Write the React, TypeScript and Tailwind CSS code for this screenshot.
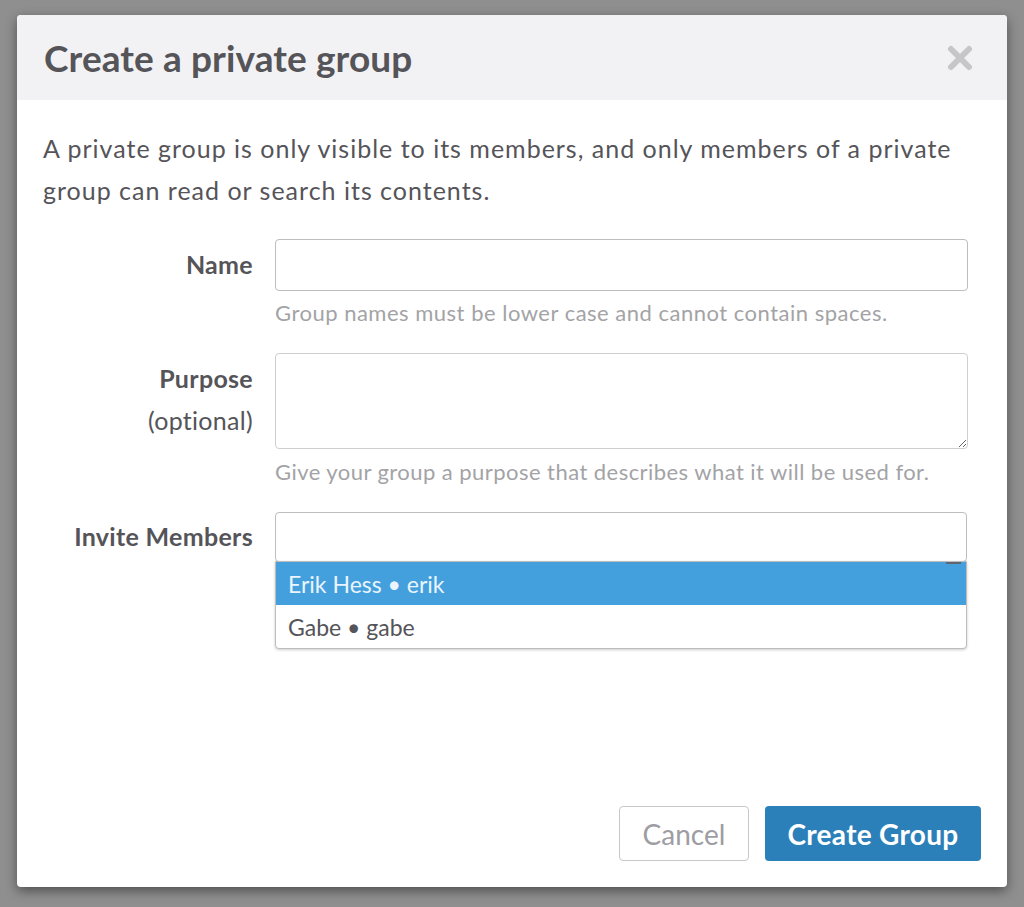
import React from "react";

export default function App() {
  return (
    <div
      className="w-[1024px] h-[907px] bg-[#8f8f8f] pt-[15px] pl-[17px]"
      style={{ fontFamily: "Lato, 'Open Sans', sans-serif" }}
    >
      <div className="w-[990px] h-[872px] bg-white rounded-[4px] shadow-[0_4px_12px_rgba(0,0,0,0.45)] flex flex-col overflow-hidden">
        <div className="h-[85px] bg-[#f2f2f4] flex items-center justify-between pl-[27px] pr-[33px]">
          <h1 className="text-[37px] font-bold text-[#555459] leading-none tracking-[0.1px]">
            Create a private group
          </h1>
          <svg width="28" height="28" viewBox="0 0 28 28">
            <path
              d="M5 5 L23 23 M23 5 L5 23"
              stroke="#c6c6c8"
              strokeWidth="6"
              strokeLinecap="round"
            />
          </svg>
        </div>
        <div className="flex-1 flex flex-col px-[26px] pt-[27px] pb-[26px]">
          <p className="text-[25px] leading-[42px] tracking-[1px] text-[#555459]">
            A private group is only visible to its members, and only members of a private group can read or search its contents.
          </p>
          <div className="mt-[28px] flex flex-col gap-[28px]">
            <div className="flex">
              <div className="w-[211px] text-right pt-[4px] pr-[1px] text-[25px] leading-[42px] tracking-[0.3px] font-bold text-[#555459]">
                Name
              </div>
              <div className="ml-[21px] w-[693px]">
                <div className="h-[52px] border border-[#bdbdbd] rounded-[4px]"></div>
                <div className="mt-[10px] text-[22px] leading-[24px] tracking-[0.5px] text-[#a3a3a6]">
                  Group names must be lower case and cannot contain spaces.
                </div>
              </div>
            </div>
            <div className="flex">
              <div className="w-[211px] text-right pt-[4px] pr-[1px] text-[25px] leading-[42px] tracking-[0.3px] text-[#555459]">
                <div className="font-bold">Purpose</div>
                <div>(optional)</div>
              </div>
              <div className="ml-[21px] w-[693px]">
                <textarea className="block w-full h-[96px] border border-[#cfcfcf] rounded-[4px] outline-none"></textarea>
                <div className="mt-[11px] text-[22px] leading-[24px] tracking-[0.45px] text-[#a3a3a6]">
                  Give your group a purpose that describes what it will be used for.
                </div>
              </div>
            </div>
            <div className="flex">
              <div className="w-[211px] text-right pt-[3px] pr-[1px] text-[25px] leading-[42px] tracking-[0.3px] font-bold text-[#555459]">
                Invite Members
              </div>
              <div className="ml-[21px] w-[692px] relative">
                <div className="h-[50px] border border-[#bdbdbd] rounded-[4px]"></div>
                <div className="absolute left-0 right-0 top-[49px] bg-white border border-[#bdbdbd] rounded-b-[4px] shadow-[0_1px_3px_rgba(0,0,0,0.2)]">
                  <div className="h-[43px] bg-[#449fdd] text-[#eaf5fd] text-[23px] leading-[45px] pl-[12px]">
                    Erik Hess • erik
                  </div>
                  <div className="h-[43px] text-[#555459] text-[23px] leading-[45px] pl-[12px]">
                    Gabe • gabe
                  </div>
                  <div className="absolute right-[5px] top-0 w-[15px] h-[2px] bg-[#5b6670]"></div>
                </div>
              </div>
            </div>
          </div>
          <div className="mt-auto flex justify-end gap-[16px]">
            <button className="w-[130px] h-[55px] border border-[#c8c8c8] rounded-[4px] text-[28px] text-[#9d9da3] bg-white">
              Cancel
            </button>
            <button className="w-[216px] h-[55px] rounded-[4px] text-[28px] tracking-[0.3px] font-bold text-white bg-[#2b80b9]">
              Create Group
            </button>
          </div>
        </div>
      </div>
    </div>
  );
}
